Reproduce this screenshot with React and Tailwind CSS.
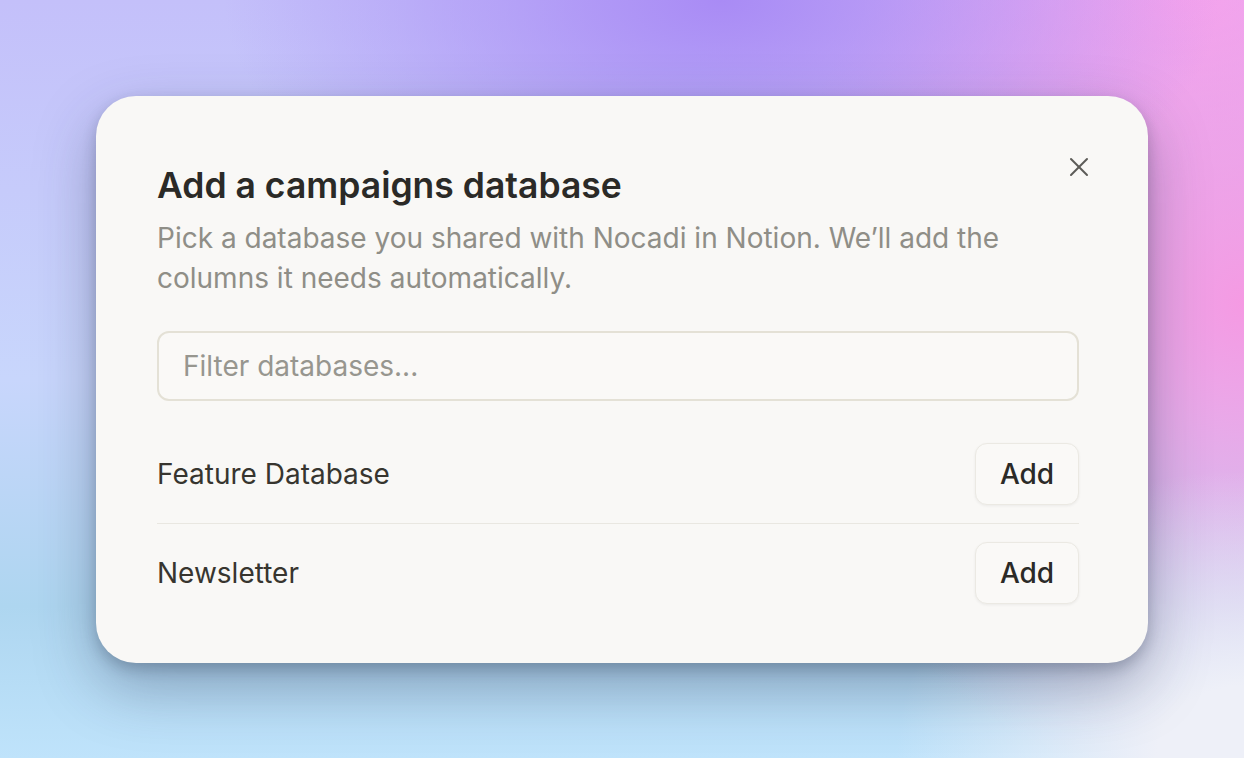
import React from "react";

function CloseIcon() {
  return (
    <svg width="20" height="20" viewBox="0 0 20 20" fill="none" stroke="#5c5b57" strokeWidth="2" strokeLinecap="round">
      <line x1="2" y1="2" x2="18" y2="18" />
      <line x1="18" y1="2" x2="2" y2="18" />
    </svg>
  );
}

function Row({ name, last }) {
  return (
    <div className={"flex items-center justify-between py-[18px] " + (last ? "" : "border-b border-[#e9e7e1]")}>
      <span className="text-[28px] text-[#37352f]">{name}</span>
      <button className="h-[62px] w-[104px] rounded-[12px] border border-[#ebe9e3] bg-[#faf9f7] text-[28px] font-medium text-[#2b2a27] shadow-[0_1px_3px_rgba(0,0,0,0.06)]">
        Add
      </button>
    </div>
  );
}

export default function App() {
  return (
    <div
      className="flex h-[758px] w-full items-center justify-center bg-[radial-gradient(ellipse_28%_38%_at_100%_100%,#eef0f8_0%,#eef0f8_25%,rgba(238,240,248,0)_100%),radial-gradient(ellipse_40%_35%_at_58%_0%,#a98bf5_0%,rgba(169,139,245,0)_100%),radial-gradient(ellipse_38%_65%_at_100%_40%,#f59ae3_0%,rgba(245,154,227,0)_100%),radial-gradient(ellipse_40%_40%_at_95%_0%,#f4a8f2_0%,rgba(244,168,242,0)_100%),linear-gradient(180deg,#c4c0fa_0%,#c8d6fc_50%,#aed6f0_80%,#bfe3fb_100%)]"
      style={{ fontFamily: "Inter, 'Noto Sans', sans-serif" }}
    >
      <div className="relative w-[1052px] rounded-[40px] bg-[#f9f8f6] pl-[61px] pr-[69px] pt-[70px] pb-[41px] shadow-[0_24px_60px_rgba(40,50,80,0.35),0_6px_14px_rgba(20,30,50,0.22)]">
        <button className="absolute right-[59px] top-[61px] flex h-[20px] w-[20px] items-center justify-center">
          <CloseIcon />
        </button>
        <h2 className="text-[35.5px] font-semibold leading-[40px] text-[#2b2a27]">Add a campaigns database</h2>
        <p className="mt-3 text-[28px] leading-[40px] text-[#8f8e87]">
          Pick a database you shared with Nocadi in Notion. We’ll add the
          <br />
          columns it needs automatically.
        </p>
        <input
          className="mt-[33px] h-[70px] w-full rounded-[12px] border-2 border-[#e4e1d6] bg-[#faf9f7] px-[24px] text-[28px] text-[#37352f] outline-none placeholder:text-[#97968f]"
          placeholder="Filter databases..."
        />
        <div className="mt-[24px]">
          <Row name="Feature Database" />
          <Row name="Newsletter" last />
        </div>
      </div>
    </div>
  );
}
